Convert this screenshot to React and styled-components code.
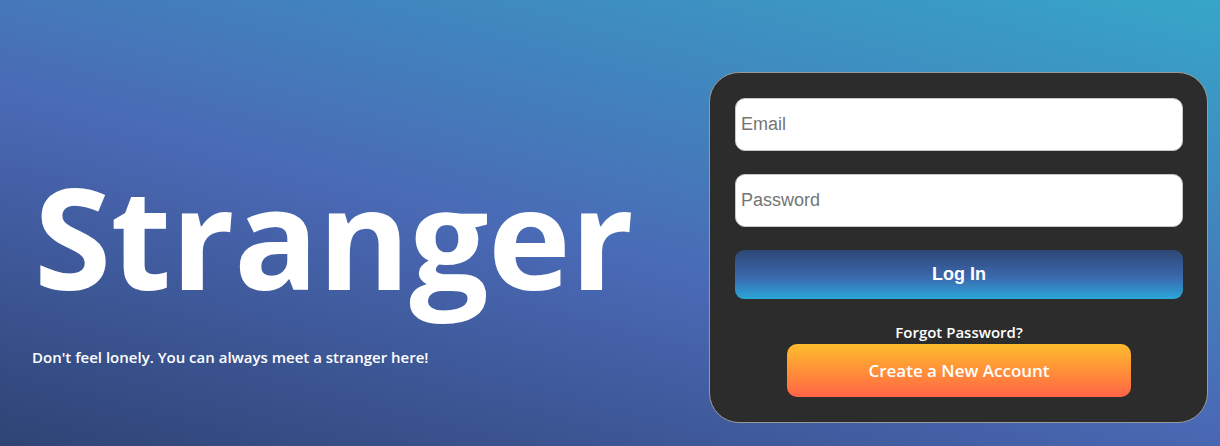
import React from "react";
import styled, { createGlobalStyle } from "styled-components";

const Global = createGlobalStyle`
  html, body { margin: 0; padding: 0; }
  body { font-family: "Open Sans", "Noto Sans", sans-serif; }
  * { box-sizing: border-box; }
`;

const Page = styled.div`
  width: 1220px;
  height: 446px;
  overflow: hidden;
  background: linear-gradient(15deg, #2f4475 0%, #4a69b5 45%, #36a6c8 100%);
  display: flex;
  align-items: flex-start;
  justify-content: space-between;
  padding: 72px 12px 0 32px;
`;

const Hero = styled.div`
  display: flex;
  flex-direction: column;
  padding-top: 74px;
  color: #fff;
`;

const Title = styled.h1`
  margin: 0 0 21px 2px;
  font-family: "Open Sans", sans-serif;
  font-weight: 700;
  font-size: 140px;
  line-height: 180px;
  letter-spacing: -0.5px;
`;

const Tagline = styled.p`
  margin: 0;
  font-family: "Open Sans", sans-serif;
  font-weight: 600;
  font-size: 15px;
  line-height: 20px;
`;

const Card = styled.form`
  width: 499px;
  height: 351px;
  background: #2c2c2c;
  border: 1px solid #9a9a9a;
  border-radius: 30px;
  padding: 25px 24px 0 25px;
  display: flex;
  flex-direction: column;
  align-items: center;
`;

const Input = styled.input`
  width: 448px;
  height: 53px;
  margin-bottom: ${(p) => p.$gap}px;
  border: 1px solid #c8c8c8;
  border-radius: 10px;
  background: #fff;
  padding: 0 5px;
  font-family: "Liberation Sans", Arial, sans-serif;
  font-size: 18px;
  color: #222;
  outline: none;
  &::placeholder { color: #757575; }
`;

const Button = styled.button`
  width: ${(p) => p.$width}px;
  height: ${(p) => p.$height}px;
  border: none;
  border-radius: ${(p) => p.$radius}px;
  background: ${(p) => p.$bg};
  color: #fff;
  font-family: ${(p) => p.$font};
  font-weight: ${(p) => p.$weight};
  font-size: ${(p) => p.$size}px;
  cursor: pointer;
  display: flex;
  align-items: center;
  justify-content: center;
`;

const ForgotLink = styled.a`
  margin: 23px 0 1px;
  color: #fff;
  font-family: "Open Sans", sans-serif;
  font-weight: 600;
  font-size: 15px;
  line-height: 21px;
  text-decoration: none;
`;

export default function App() {
  return (
    <>
      <Global />
      <Page>
        <Hero>
          <Title>Stranger</Title>
          <Tagline>Don't feel lonely. You can always meet a stranger here!</Tagline>
        </Hero>
        <Card onSubmit={(e) => e.preventDefault()}>
          <Input type="email" placeholder="Email" $gap={23} />
          <Input type="password" placeholder="Password" $gap={23} />
          <Button
            type="submit"
            $width={448}
            $height={49}
            $radius={9}
            $bg="linear-gradient(180deg, #2d4775 0%, #3c68ad 55%, #2aa7d8 100%)"
            $font={'"Liberation Sans", Arial, sans-serif'}
            $weight={700}
            $size={18}
          >
            Log In
          </Button>
          <ForgotLink href="#">Forgot Password?</ForgotLink>
          <Button
            type="button"
            $width={344}
            $height={53}
            $radius={10}
            $bg="linear-gradient(180deg, #fdbc2c 0%, #ff8c3a 55%, #ff6446 100%)"
            $font={'"Open Sans", sans-serif'}
            $weight={600}
            $size={17}
          >
            Create a New Account
          </Button>
        </Card>
      </Page>
    </>
  );
}
